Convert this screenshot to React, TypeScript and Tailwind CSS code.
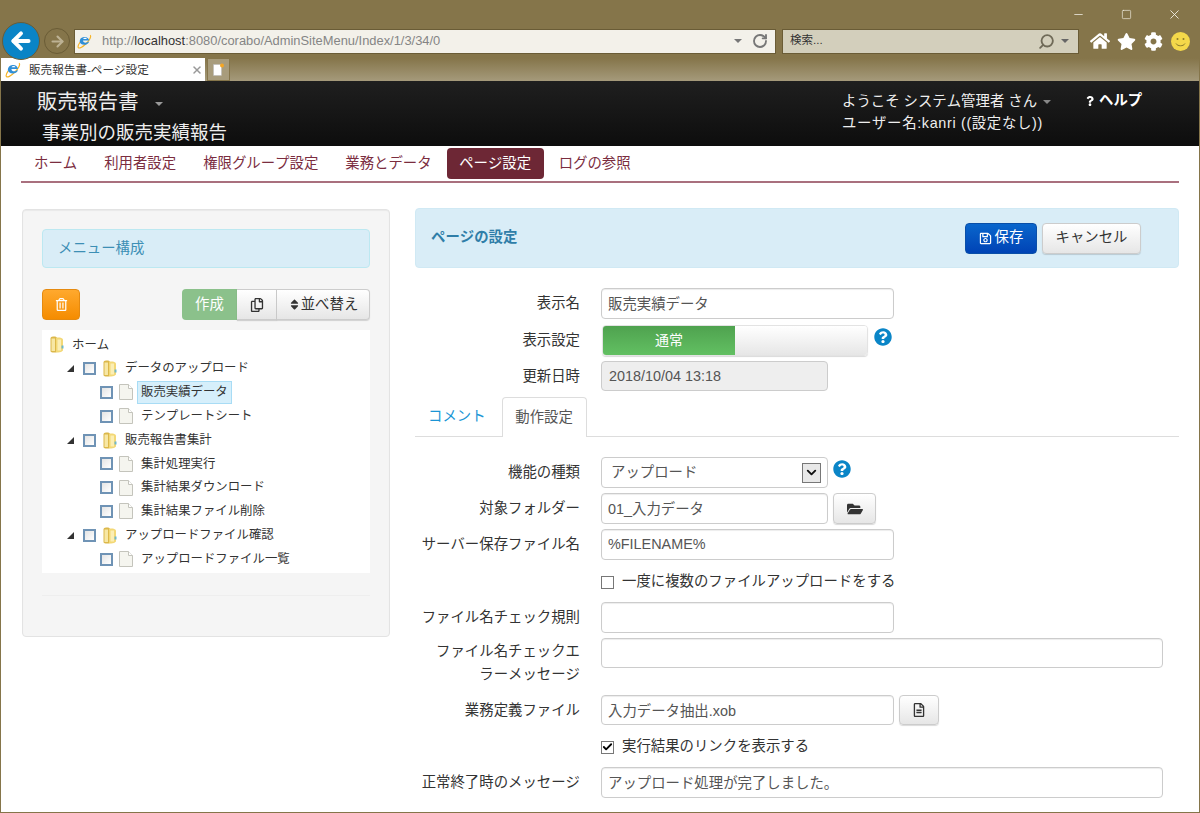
import React from "react";
import { ArrowLeft, ArrowRight, RotateCw, Search, X, Minus, Square, ChevronDown, Check } from "lucide-react";
import {
  FaHome, FaStar, FaCog, FaRegTrashAlt, FaRegCopy, FaSort, FaRegSave, FaFolderOpen, FaRegFileAlt, FaQuestionCircle, FaQuestion,
} from "react-icons/fa";

function IeLogo({ size = 16 }: { size?: number }) {
  return (
    <svg width={size} height={size} viewBox="0 0 20 20" className="shrink-0">
      <path d="M17.5 1.5C19.5 3 17 8 12 13S3 19.5 1.8 18.2C.8 17 2 14 4 11" fill="none" stroke="#f5b324" strokeWidth="1.5" />
      <path d="M3.5 10a6.5 6.5 0 0 1 12.8-1.2H8c.1 3.2 4.4 3.8 6.8 1.4h1.4C14.5 15.5 4.5 16 3.5 10z" fill="#2f8fd8" />
      <path d="M8.2 6.6h4.9C12.6 4.4 8.9 4.4 8.2 6.6z" fill="#ffffff" />
    </svg>
  );
}

function Folder() {
  return (
    <svg width="14" height="17" viewBox="0 0 14 17" className="shrink-0">
      <path d="M.5 2.500C.5 1.200 1.500.500 3 .500h2c1.500 0 2 1 2 2v13c0 .6-.8 1-1.500 1H2.500C1.300 16.500.5 15.800.5 14.800z" fill="#dcb84a" />
      <path d="M6 2c2.800-.8 5.800-.3 7 1.200v11.300c-1.200 1.700-4.200 2.300-7 1.700z" fill="#f3d876" />
      <path d="M1.500 2.500h3.500v12.500h-3.500z" fill="#f7e7a4" />
      <path d="M7.500 3.500h3.500v11h-3.500z" fill="#fbeeb4" />
      <rect x="11.500" y="9.500" width="2" height="3" fill="#6fb7c9" />
    </svg>
  );
}

function FileIcon() {
  return (
    <svg width="14" height="16" viewBox="0 0 14 16" className="shrink-0">
      <path d="M.5.500h9l4 4v11H.500z" fill="#f5f5ef" stroke="#c4c4bc" />
      <path d="M9.500.500v4h4" fill="#ffffff" stroke="#c4c4bc" />
    </svg>
  );
}

function TreeBox() {
  return <span className="block h-[13px] w-[13px] shrink-0 border-2 border-[#6f93b5] bg-[linear-gradient(135deg,#e4e4e4,#ffffff)]" />;
}

function Arrow() {
  return (
    <svg width="7" height="7" viewBox="0 0 7 7" className="shrink-0">
      <path d="M7 0v7H0z" fill="#333333" />
    </svg>
  );
}

function Caret({ color }: { color: string }) {
  return <span className={`block h-0 w-0 shrink-0 border-x-[4px] border-t-[4px] border-x-transparent ${color}`} />;
}

type Node = { text: string; level: 0 | 1 | 2; selected?: boolean };
const tree: Node[] = [
  { text: "ホーム", level: 0 },
  { text: "データのアップロード", level: 1 },
  { text: "販売実績データ", level: 2, selected: true },
  { text: "テンプレートシート", level: 2 },
  { text: "販売報告書集計", level: 1 },
  { text: "集計処理実行", level: 2 },
  { text: "集計結果ダウンロード", level: 2 },
  { text: "集計結果ファイル削除", level: 2 },
  { text: "アップロードファイル確認", level: 1 },
  { text: "アップロードファイル一覧", level: 2 },
];

function TreeRow({ node }: { node: Node }) {
  return (
    <div className="flex h-[23.8px] items-center text-[12.4px] text-[#333]">
      {node.level === 0 && (
        <div className="ml-[8px] flex items-center">
          <Folder />
          <span className="ml-[8px]">{node.text}</span>
        </div>
      )}
      {node.level === 1 && (
        <div className="ml-[25px] flex items-center">
          <Arrow />
          <span className="ml-[9px] flex"><TreeBox /></span>
          <span className="ml-[7px] flex"><Folder /></span>
          <span className="ml-[8px]">{node.text}</span>
        </div>
      )}
      {node.level === 2 && (
        <div className="ml-[58px] flex items-center">
          <TreeBox />
          <span className="ml-[6px] flex"><FileIcon /></span>
          {node.selected ? (
            <span className="ml-[4px] border border-[#a8dcf5] bg-[#d6effb] px-[3px] py-[1px] leading-[19px]">{node.text}</span>
          ) : (
            <span className="ml-[8px]">{node.text}</span>
          )}
        </div>
      )}
    </div>
  );
}

function Field({ value, width, h = "h-[31px]" }: { value: string; width: string; h?: string }) {
  return (
    <input
      readOnly
      value={value}
      className={`${width} ${h} rounded-[4px] border border-[#ccc] bg-white px-[6px] pb-[2px] text-[14.4px] text-[#555] shadow-[inset_0_1px_1px_rgba(0,0,0,0.075)] outline-none`}
    />
  );
}

function Label({ children }: { children: React.ReactNode }) {
  return <label className="block w-[165px] shrink-0 text-right text-[14.4px] leading-[23px] text-[#333]">{children}</label>;
}

function Help() {
  return <FaQuestionCircle className="text-[18px] text-[#0a85c7]" />;
}

const grayBtn = "flex items-center justify-center border border-[#ccc] bg-[linear-gradient(to_bottom,#ffffff,#e6e6e6)] text-[14.4px] text-[#333] shadow-[0_1px_1px_rgba(0,0,0,0.15)]";

const navItems = ["ホーム", "利用者設定", "権限グループ設定", "業務とデータ", "ページ設定", "ログの参照"];

export default function App() {
  return (
    <div className="flex h-[813px] w-[1200px] flex-col overflow-hidden border-x border-b border-[#85754a] bg-white [font-family:'Liberation_Sans','Noto_Sans_CJK_JP',sans-serif] [font-kerning:none]">
      {/* browser chrome */}
      <div className="h-[81px] shrink-0 bg-[linear-gradient(to_bottom,#85754a_72%,#a59a7b_100%)]">
        <div className="flex h-[28px] items-center justify-end text-[#f5f2e8]">
          <Minus size={13} strokeWidth={1.4} />
          <Square size={11} strokeWidth={1.4} className="ml-[36px]" />
          <X size={15} strokeWidth={1.4} className="ml-[35px] mr-[17px]" />
        </div>
        <div className="flex h-[26px] items-center">
          <div className="relative z-10 ml-[1px] flex h-[38px] w-[38px] shrink-0 items-center justify-center rounded-full border border-[#6a5c36] bg-[#0a84c6] text-white">
            <ArrowLeft size={26} strokeWidth={3.6} />
          </div>
          <div className="ml-[4px] flex h-[26px] w-[26px] shrink-0 items-center justify-center rounded-full border border-[#6a5c36] bg-[#85754a] text-[#bdb294]">
            <ArrowRight size={17} strokeWidth={3} />
          </div>
          <div className="ml-[4px] flex h-[25px] w-[702px] shrink-0 items-center border border-[#6a5c36] bg-[#f3f1ea] pl-[2px] pr-[4px]">
            <IeLogo size={15} />
            <span className="ml-[10px] flex-1 text-[12.9px] text-[#858585]">
              http://<span className="text-[#333]">localhost</span>:8080/corabo/AdminSiteMenu/Index/1/3/34/0
            </span>
            <Caret color="border-t-[#777]" />
            <RotateCw size={16} strokeWidth={2.8} className="ml-[10px] mr-[3px] text-[#777]" />
          </div>
          <div className="ml-[6px] flex h-[25px] w-[297px] shrink-0 items-center border border-[#6a5c36] bg-[#d3cfbc] pl-[7px] pr-[9px]">
            <span className="flex-1 text-[11.5px] text-[#333]">検索...</span>
            <Search size={17} strokeWidth={2.6} className="-scale-x-100 text-[#6f6a58]" />
            <span className="ml-[6px] flex"><Caret color="border-t-[#666]" /></span>
          </div>
          <div className="ml-[11px] flex items-center text-white">
            <FaHome className="text-[20px]" />
            <FaStar className="ml-[7px] text-[19px]" />
            <FaCog className="ml-[8px] text-[19px]" />
            <svg width="19" height="19" viewBox="0 0 19 19" className="ml-[8px]">
              <circle cx="9.500" cy="9.500" r="9.500" fill="#f4d84a" />
              <circle cx="6.500" cy="7" r="1" fill="#8a7a2a" />
              <circle cx="12.500" cy="7" r="1" fill="#8a7a2a" />
              <path d="M5 11.500c1.500 3 7.500 3 9 0" fill="none" stroke="#8a7a2a" strokeWidth="1" />
            </svg>
          </div>
        </div>
        <div className="mt-[4px] flex h-[23px] items-stretch">
          <div className="flex w-[204px] items-center bg-white pl-[4px] pr-[2px]">
            <IeLogo size={16} />
            <span className="ml-[8px] flex-1 text-[11.6px] text-[#333]">販売報告書-ページ設定</span>
            <X size={12} strokeWidth={3} className="text-[#999]" />
          </div>
          <div className="ml-[2px] flex w-[23px] items-center justify-center border border-[#85754a] bg-[#a89c7c]">
            <svg width="11" height="13" viewBox="0 0 11 13">
              <rect x="0.500" y="1.500" width="8" height="11" fill="#ffffff" stroke="#b5b5b5" strokeWidth="0.500" />
              <circle cx="9" cy="2.500" r="2" fill="#f5a623" />
            </svg>
          </div>
        </div>
      </div>

      {/* app header */}
      <header className="flex h-[65px] shrink-0 bg-[linear-gradient(to_bottom,#1f1f1f,#0d0d0d)] text-[#eee]">
        <div className="ml-[36px] w-[805px]">
          <div className="flex h-[39px] items-center pt-[4px] text-[20.3px]">
            販売報告書
            <span className="ml-[17px] mt-[2px] h-0 w-0 border-x-[4px] border-t-[4px] border-x-transparent border-t-[#999]" />
          </div>
          <div className="ml-[5px] text-[18.5px] leading-[26px]">事業別の販売実績報告</div>
        </div>
        <div className="w-[243px] pt-[9px] text-[14.4px] leading-[22px]">
          <div className="flex items-center">
            ようこそ システム管理者 さん
            <span className="ml-[6px] mt-[2px] h-0 w-0 border-x-[4px] border-t-[4px] border-x-transparent border-t-[#888]" />
          </div>
          <div className="tracking-[0.65px]">ユーザー名:kanri ((設定なし))</div>
        </div>
        <div className="flex h-[39px] items-center text-[14.4px] font-bold text-white">
          <FaQuestion className="mr-[4px] text-[10px]" />
          ヘルプ
        </div>
      </header>

      {/* nav */}
      <nav className="mx-[20px] flex h-[37px] shrink-0 items-start gap-[3px] border-b-2 border-[#a9707e] pl-[1px] pt-[2px] text-[14.4px] text-[#7b2d3f]">
        {navItems.map((n) =>
          n === "ページ設定" ? (
            <span key={n} className="flex h-[31px] items-center rounded-[4px] bg-[#6d2735] px-[12.5px] text-white">{n}</span>
          ) : (
            <span key={n} className="flex h-[31px] items-center px-[12px]">{n}</span>
          )
        )}
      </nav>

      {/* main */}
      <main className="flex items-start">
        <section className="ml-[21px] mt-[26px] w-[368px] shrink-0 rounded-[4px] border border-[#e3e3e3] bg-[#f5f5f5] px-[19px] pb-[40px] pt-[19px] shadow-[inset_0_1px_1px_rgba(0,0,0,0.05)]">
          <div className="flex h-[39px] items-center rounded-[4px] border border-[#bce8f1] bg-[#d9edf7] pl-[15px] text-[14.4px] text-[#3d8fb5]">メニュー構成</div>
          <div className="mt-[21px] flex h-[31px] items-stretch justify-between">
            <button className="flex w-[38px] items-center justify-center rounded-[4px] border border-[#e58a10] bg-[linear-gradient(to_bottom,#ffa92e,#f58c00)] text-[13px] text-white">
              <FaRegTrashAlt />
            </button>
            <div className="flex">
              <button className="flex w-[55px] items-center justify-center rounded-l-[4px] bg-[#8bc18b] text-[14.4px] text-white">作成</button>
              <button className={`${grayBtn} w-[40px] border-l-0`}><FaRegCopy className="text-[14px]" /></button>
              <button className={`${grayBtn} w-[93px] rounded-r-[4px] border-l-0`}><FaSort className="text-[13px]" />並べ替え</button>
            </div>
          </div>
          <div className="mt-[10px] bg-white pb-[2px] pt-[3px]">
            {tree.map((n) => <TreeRow key={n.text} node={n} />)}
          </div>
          <hr className="mt-[22px] border-t border-[#eee]" />
        </section>

        <section className="ml-[25px] mt-[25px] w-[764px] shrink-0">
          <div className="flex h-[60px] items-center justify-between rounded-[4px] border border-[#d0e9f4] bg-[#d9edf7] pl-[15px] pr-[37px]">
            <h2 className="text-[14.4px] font-bold text-[#2f7ea8]">ページの設定</h2>
            <div className="flex gap-[5px]">
              <button className="flex h-[31px] w-[72px] items-center justify-center gap-[3px] rounded-[4px] border border-[#0a4fa8] bg-[linear-gradient(to_bottom,#0a66cc,#0043b5)] text-[14.4px] text-white">
                <FaRegSave className="text-[13px]" />保存
              </button>
              <button className={`${grayBtn} h-[31px] w-[99px] rounded-[4px]`}>キャンセル</button>
            </div>
          </div>

          <div className="mt-[20px] flex items-center gap-[21px]">
            <Label>表示名</Label>
            <Field value="販売実績データ" width="w-[293px]" />
          </div>
          <div className="mt-[6px] flex items-center gap-[21px]">
            <Label>表示設定</Label>
            <div className="flex items-start">
              <div className="ml-[1px] flex h-[31px] w-[266px] overflow-hidden rounded-[4px] border border-[#e3e3e3] shadow-[0_1px_1px_rgba(0,0,0,0.15)]">
                <span className="flex w-[132px] items-center justify-center bg-[linear-gradient(to_bottom,#4fa24f,#62c062)] text-[14px] text-white">通常</span>
                <span className="flex-1 bg-[linear-gradient(to_bottom,#ffffff,#e6e6e6)]" />
              </div>
              <span className="ml-[6px] mt-[3px]"><Help /></span>
            </div>
          </div>
          <div className="mt-[5px] flex items-center gap-[21px]">
            <Label>更新日時</Label>
            <input readOnly value="2018/10/04 13:18" className="h-[30px] w-[227px] rounded-[4px] border border-[#ccc] bg-[#eee] px-[7px] text-[14.4px] text-[#555] outline-none" />
          </div>

          <div className="mt-[6px] flex h-[40px] items-end border-b border-[#ddd] text-[14.4px]">
            <span className="flex h-[39px] items-center pl-[13px] pr-[16px] text-[#1a95d5]">コメント</span>
            <span className="-mb-[1px] flex h-[40px] w-[85px] items-center justify-center rounded-t-[4px] border border-b-0 border-[#ddd] bg-white text-[#555]">動作設定</span>
          </div>

          <div className="mt-[20px] flex items-center gap-[21px]">
            <Label>機能の種類</Label>
            <div className="flex items-start">
              <div className="flex h-[31px] w-[227px] items-center rounded-[4px] border border-[#ccc] pl-[9px] pr-[6px] text-[14.4px] text-[#555]">
                <span className="flex-1">アップロード</span>
                <span className="flex h-[20px] w-[19px] items-center justify-center border border-[#777] bg-[#e8e8e8] text-[#111]">
                  <ChevronDown size={15} strokeWidth={3} />
                </span>
              </div>
              <span className="ml-[5px] mt-[3px]"><Help /></span>
            </div>
          </div>
          <div className="mt-[5px] flex items-center gap-[21px]">
            <Label>対象フォルダー</Label>
            <div className="flex gap-[5px]">
              <Field value="01_入力データ" width="w-[227px]" />
              <button className={`${grayBtn} h-[31px] w-[43px] rounded-[4px]`}><FaFolderOpen className="text-[16px]" /></button>
            </div>
          </div>
          <div className="mt-[5px] flex items-center gap-[21px]">
            <Label>サーバー保存ファイル名</Label>
            <Field value="%FILENAME%" width="w-[293px]" />
          </div>
          <div className="mt-[13px] flex h-[18px] items-center gap-[21px]">
            <span className="w-[165px] shrink-0" />
            <span className="flex items-center text-[14.4px] text-[#333]">
              <span className="h-[13px] w-[13px] border border-[#777] bg-white" />
              <span className="ml-[8px]">一度に複数のファイルアップロードをする</span>
            </span>
          </div>
          <div className="mt-[11px] flex items-center gap-[21px]">
            <Label>ファイル名チェック規則</Label>
            <Field value="" width="w-[293px]" />
          </div>
          <div className="mt-[5px] flex items-start gap-[21px]">
            <div className="shrink-0 pt-[2px]"><Label>ファイル名チェックエ<br />ラーメッセージ</Label></div>
            <Field value="" width="w-[562px]" h="h-[30px]" />
          </div>
          <div className="mt-[9px] flex items-center gap-[21px]">
            <Label>業務定義ファイル</Label>
            <div className="flex gap-[5px]">
              <Field value="入力データ抽出.xob" width="w-[293px]" h="h-[30px]" />
              <button className={`${grayBtn} h-[30px] w-[40px] rounded-[4px]`}><FaRegFileAlt className="text-[14px]" /></button>
            </div>
          </div>
          <div className="mt-[13px] flex h-[18px] items-center gap-[21px]">
            <span className="w-[165px] shrink-0" />
            <span className="flex items-center text-[14.4px] text-[#333]">
              <span className="flex h-[13px] w-[13px] items-center justify-center border border-[#777] bg-white text-black">
                <Check size={12} strokeWidth={4} />
              </span>
              <span className="ml-[8px]">実行結果のリンクを表示する</span>
            </span>
          </div>
          <div className="mt-[11px] flex items-center gap-[21px]">
            <Label>正常終了時のメッセージ</Label>
            <Field value="アップロード処理が完了しました。" width="w-[562px]" />
          </div>
        </section>
      </main>
    </div>
  );
}
